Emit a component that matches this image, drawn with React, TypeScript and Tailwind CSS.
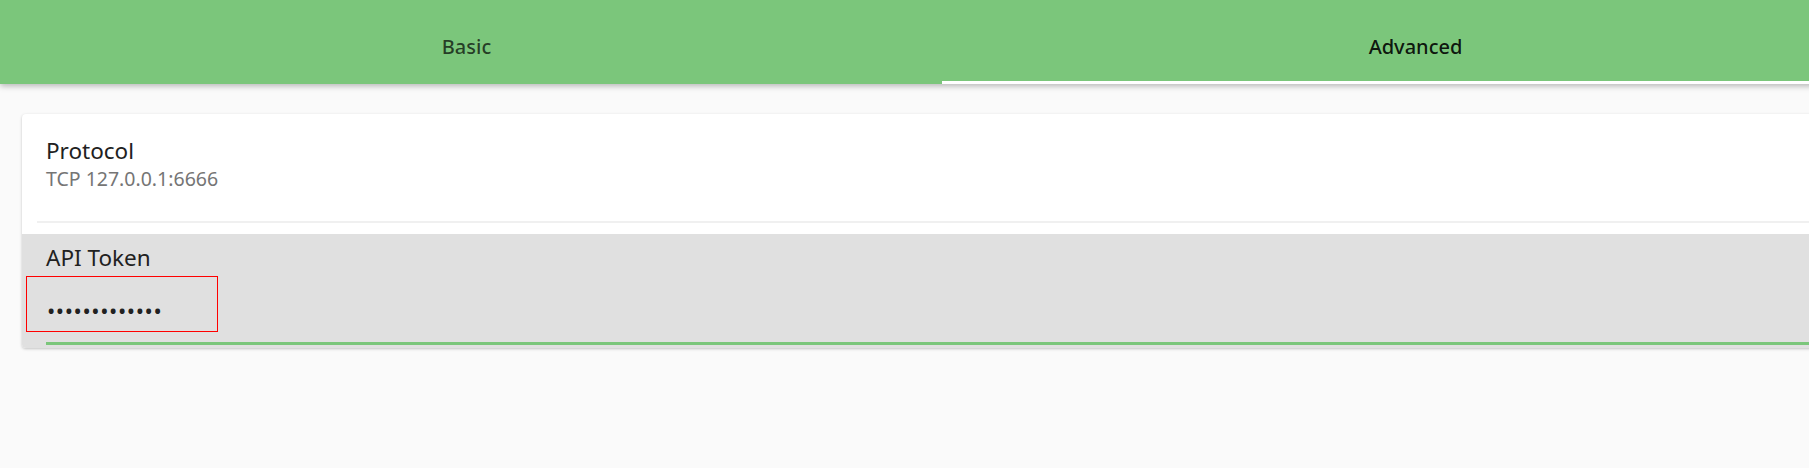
// Settings screen: Basic / Advanced tabs with a connection card

const font = { fontFamily: '"Noto Sans", "Open Sans", sans-serif' };

function Tabs() {
  return (
    <div className="relative z-10 flex h-[84px] bg-[#7bc67b] shadow-[0_2px_6px_rgba(0,0,0,0.28)]">
      <div className="flex flex-1 justify-center pt-[33px] pr-[9px]">
        <span className="text-[20px] leading-[28px] font-medium text-black/70">Basic</span>
      </div>
      <div className="flex flex-1 justify-center border-b-[3px] border-white pt-[33px] pl-[7px]">
        <span className="text-[20px] leading-[28px] font-medium text-black/90">Advanced</span>
      </div>
    </div>
  );
}

function SettingsCard() {
  return (
    <div className="overflow-hidden rounded-[4px] bg-white shadow-[0_1px_3px_rgba(0,0,0,0.22)]">
      {/* Protocol */}
      <div className="pl-[24px] pt-[22px] pb-[29px]">
        <div className="text-[22.5px] leading-[30px] text-[#212121]">Protocol</div>
        <div className="text-[19.5px] leading-[26px] text-[#757575]">TCP 127.0.0.1:6666</div>
      </div>
      <div className="ml-[15px] h-[2px] bg-[#f0f0f0]" />

      {/* API Token field */}
      <div className="mt-[11px] bg-[#e0e0e0] pt-[9px] pb-[3px]">
        <div className="pl-[24px] text-[22.5px] leading-[30px] text-[#212121]">API Token</div>
        <div className="ml-[4px] mt-[3px] flex h-[56px] w-[192px] items-start border border-[#ff0000] pl-[20px] pt-[18px]">
          <input
            type="password"
            defaultValue="abcdefghijklm"
            readOnly
            className="w-[165px] bg-transparent text-[22px] leading-[30px] tracking-[0.6px] text-[#212121] outline-none"
            style={font}
          />
        </div>
        <div className="ml-[24px] mt-[10px] h-[3px] bg-[#7bc67b]" />
      </div>
    </div>
  );
}

export default function App() {
  return (
    <div className="h-[468px] w-[1809px] overflow-hidden bg-[#fafafa]" style={font}>
      <div className="w-[1882px]">
        <Tabs />
        <div className="px-[22px] pt-[30px]">
          <SettingsCard />
        </div>
      </div>
    </div>
  );
}
